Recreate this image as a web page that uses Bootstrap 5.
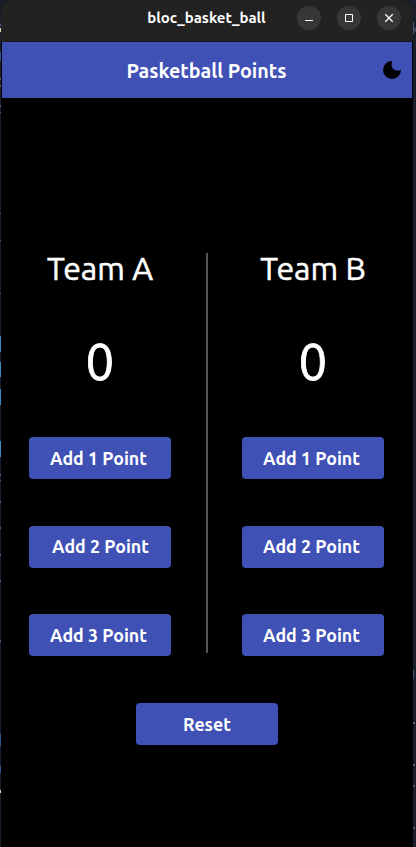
<!DOCTYPE html>
<html lang="en">
<head>
<meta charset="utf-8">
<meta name="viewport" content="width=device-width, initial-scale=1">
<title>bloc_basket_ball</title>
<link href="https://cdn.jsdelivr.net/npm/bootstrap@5.3.0/dist/css/bootstrap.min.css" rel="stylesheet">
<style>
  body { height: 847px; background: #1a1d2b; font-family: Ubuntu, "Noto Sans", sans-serif; line-height: 1; }
  .desktop { height: 847px; padding: 0 4px 0 1px; }
  /* slivers of the editor behind the window */
  .sliver { position: absolute; overflow: hidden; }
  .sliver-left { left: 0; top: 0; }
  .sliver-right { left: 413px; top: 0; }
  .app-window { width: 412px; padding: 0 1px; border-radius: 10px 10px 0 0; }
  .titlebar { height: 42px; background: #222; border-bottom: 1px solid #171717; margin: 0 -1px; padding: 0 12px 5px; border-radius: 10px 10px 0 0; }
  .win-title { font-size: 15px; padding: 0 1px 2px 0; }
  .win-controls { gap: 16px; }
  .win-btn { width: 24px; height: 24px; background: #373737; }
  .appbar { height: 56px; background: #3f51b5; }
  .app-title { font-size: 19.7px; font-weight: 600; padding: 4px 1px 0 0; }
  .moon { right: 10px; top: 18px; }
  .board { padding-top: 155px; }
  .team { width: 197px; height: 404px; padding-right: 1px; }
  .rule { width: 16px; height: 400px; }
  .rule-line { width: 2px; background: #555; }
  .team-name { font-size: 32px; font-weight: 400; height: 32px; margin-top: -4px; -webkit-text-stroke: .5px #fff; }
  .score { font-size: 51px; height: 52px; margin-top: 55px; -webkit-text-stroke: .8px #fff; }
  .actions { gap: 46.7px; margin-top: 49px; }
  .btn-point { --bs-btn-bg: #3f51b5; --bs-btn-color: #fff; --bs-btn-hover-bg: #4a5cc0; --bs-btn-hover-color: #fff; --bs-btn-active-bg: #3949a3; --bs-btn-active-color: #fff;
    width: 142px; height: 42px; font-size: 17.8px; font-weight: 600; line-height: 1; }
  .fit { display: inline-block; white-space: nowrap; }
  .reset-row { margin-top: 46px; }
  .btn-point .fit { padding-top: 1px; }
  .team .btn-point .fit { padding-left: 1px; }
</style>
<script src="https://cdn.jsdelivr.net/npm/bootstrap@5.3.0/dist/js/bootstrap.bundle.min.js"></script>
</head>
<body class="overflow-hidden">
<svg class="sliver sliver-left" width="1" height="847" aria-hidden="true"><path stroke="#3b8fc0" stroke-width="2" d="M0 336v16M0 362v15M0 389v16M0 441v16"/><path stroke="#2b558c" stroke-width="2" d="M0 52v9M0 734v12M0 766v7"/><path stroke="#555a7c" stroke-width="2" d="M0 24v2M0 78v2M0 85v2M0 105v2M0 112v1M0 213v1M0 240v1M0 293v1M0 474v2M0 480v1M0 501v2M0 527v2M0 554v2M0 580v2M0 640v2"/><path stroke="#d6cdb0" stroke-width="2" d="M0 28v4M0 790v3"/></svg>
<svg class="sliver sliver-right" width="3" height="847" aria-hidden="true"><path stroke="#4c5576" d="M0 30h3M1 27l2 5M.5 22v12M.5 670v9"/><path stroke="#a98d80" d="M0 723h2M0 765h2M0 786h2M0 828h2"/></svg>
<div class="desktop">
  <main class="app-window bg-black h-100 text-white">
    <header class="titlebar position-relative d-flex align-items-center justify-content-end">
      <div class="win-title fw-bold position-absolute start-0 end-0 text-center"><span class="fit">bloc_basket_ball</span></div>
      <div class="win-controls d-flex position-relative">
        <span class="win-btn rounded-circle d-block"><svg class="d-block" width="24" height="24" fill="none" stroke="#fff"><path d="M8 14.5h8"/></svg></span>
        <span class="win-btn rounded-circle d-block"><svg class="d-block" width="24" height="24" fill="none" stroke="#fff"><path d="M8.5 8.5h7v7h-7z"/></svg></span>
        <span class="win-btn rounded-circle d-block"><svg class="d-block" width="24" height="24" fill="none" stroke="#fff" stroke-width="1.3"><path d="M8.3 8.3l7.4 7.4M15.7 8.3l-7.4 7.4"/></svg></span>
      </div>
    </header>
    <nav class="appbar position-relative d-flex align-items-center justify-content-center">
      <div class="app-title"><span class="fit">Pasketball Points</span></div>
      <svg class="moon position-absolute" width="20" height="20" viewBox="0 0 20 20"><path fill="#000" d="M10.300 1A9 9 0 1 0 19 9.900C14.500 12 7.200 9.500 10.300 1z"/></svg>
    </nav>
    <section class="board d-flex">
      <div class="team d-flex flex-column align-items-center">
        <h1 class="team-name mb-0"><span class="fit">Team A</span></h1>
        <div class="score"><span class="fit">0</span></div>
        <div class="actions d-flex flex-column">
          <button type="button" class="btn btn-point rounded-1 border-0 p-0 pe-1"><span class="fit">Add 1 Point</span></button>
          <button type="button" class="btn btn-point rounded-1 border-0 p-0"><span class="fit">Add 2 Point</span></button>
          <button type="button" class="btn btn-point rounded-1 border-0 p-0 pe-1"><span class="fit">Add 3 Point</span></button>
        </div>
      </div>
      <div class="rule d-flex justify-content-center"><div class="rule-line"></div></div>
      <div class="team d-flex flex-column align-items-center">
        <h1 class="team-name mb-0"><span class="fit">Team B</span></h1>
        <div class="score"><span class="fit">0</span></div>
        <div class="actions d-flex flex-column">
          <button type="button" class="btn btn-point rounded-1 border-0 p-0 pe-1"><span class="fit">Add 1 Point</span></button>
          <button type="button" class="btn btn-point rounded-1 border-0 p-0 pe-1"><span class="fit">Add 2 Point</span></button>
          <button type="button" class="btn btn-point rounded-1 border-0 p-0 pe-1"><span class="fit">Add 3 Point</span></button>
        </div>
      </div>
    </section>
    <div class="reset-row d-flex justify-content-center">
      <button type="button" class="btn btn-point rounded-1 border-0 p-0"><span class="fit">Reset</span></button>
    </div>
  </main>
</div>
</body>
</html>
